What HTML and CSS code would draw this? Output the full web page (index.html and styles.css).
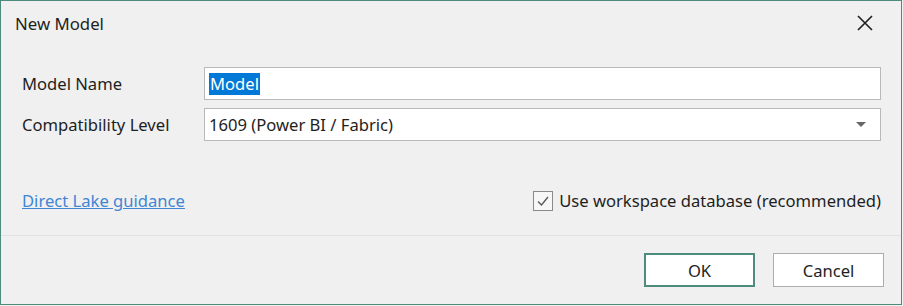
FILE: index.html
```html
<!DOCTYPE html>
<html lang="en">
<head>
    <meta charset="UTF-8">
    <title>New Model</title>
    <link rel="stylesheet" href="styles.css">
</head>
<body>
    <div class="window">
        <div class="titlebar">
            <span class="title">New Model</span>
            <svg class="close" width="16" height="16" viewBox="0 0 16 16">
                <path d="M1 1 L15 15 M15 1 L1 15" stroke="#1e1e1e" stroke-width="1.6" fill="none"/>
            </svg>
        </div>

        <div class="content">
            <div class="form">
                <label class="label">Model Name</label>
                <div class="field"><span class="selected">Model</span></div>

                <label class="label">Compatibility Level</label>
                <div class="field select">
                    <span>1609 (Power BI / Fabric)</span>
                    <span class="arrow"></span>
                </div>
            </div>

            <div class="options">
                <a class="link" href="#">Direct Lake guidance</a>
                <label class="check">
                    <span class="box">
                        <svg width="14" height="14" viewBox="0 0 14 14">
                            <path d="M2 7.5 L5.5 11 L12 3" stroke="#555" stroke-width="1.3" fill="none"/>
                        </svg>
                    </span>
                    Use workspace database (recommended)
                </label>
            </div>
        </div>

        <div class="footer">
            <button class="btn primary">OK</button>
            <button class="btn">Cancel</button>
        </div>
    </div>
</body>
</html>
```

FILE: styles.css
```css
body {
  margin: 0;
  background: #f0f0f0;
  font-family: 'Noto Sans', 'Open Sans', sans-serif;
  color: #1e1e1e;
}

.window {
  width: 900px;
  height: 303px;
  border: 1px solid #4f8b7c;
  background: #f0f0f0;
  display: flex;
  flex-direction: column;
}

.titlebar {
  display: flex;
  justify-content: space-between;
  align-items: center;
  height: 46px;
  padding: 0 28px 0 14px;
}

.title {
  font-size: 16.8px;
  margin-top: -2px;
}

.close {
  margin-top: -2px;
}

.content {
  padding: 20px 20px 0 21px;
  height: 168px;
  border-bottom: 1px solid #e2e2e2;
}

.form {
  display: grid;
  grid-template-columns: 182px 677px;
  row-gap: 8px;
  align-items: center;
}

.label {
  font-size: 16.6px;
}

.field {
  height: 31px;
  border: 1px solid #b9b9b9;
  background: #fff;
  display: flex;
  align-items: center;
  padding: 0 4px;
  font-size: 16.6px;
}

.selected {
  background: #0078d7;
  color: #fff;
  padding: 0 1px;
  line-height: 22px;
}

.select {
  justify-content: space-between;
  padding-right: 14px;
}

.arrow {
  width: 0;
  height: 0;
  border-left: 5px solid transparent;
  border-right: 5px solid transparent;
  border-top: 5px solid #666;
}

.options {
  display: flex;
  justify-content: space-between;
  align-items: center;
  margin-top: 48px;
}

.link {
  color: #3f86d4;
  font-size: 16.6px;
  text-decoration: underline;
}

.check {
  display: flex;
  align-items: center;
  gap: 6px;
  font-size: 16.6px;
}

.box {
  width: 18px;
  height: 18px;
  border: 1px solid #8a8a8a;
  background: #f7f7f7;
  display: flex;
  align-items: center;
  justify-content: center;
}

.footer {
  display: flex;
  justify-content: flex-end;
  gap: 18px;
  padding: 17px 17px 0 0;
}

.btn {
  width: 111px;
  height: 34px;
  border: 1px solid #adadad;
  background: #fff;
  font-family: 'Noto Sans', 'Open Sans', sans-serif;
  font-size: 16.6px;
  color: #1e1e1e;
}

.btn.primary {
  border: 2px solid #4f8b7c;
}
```
